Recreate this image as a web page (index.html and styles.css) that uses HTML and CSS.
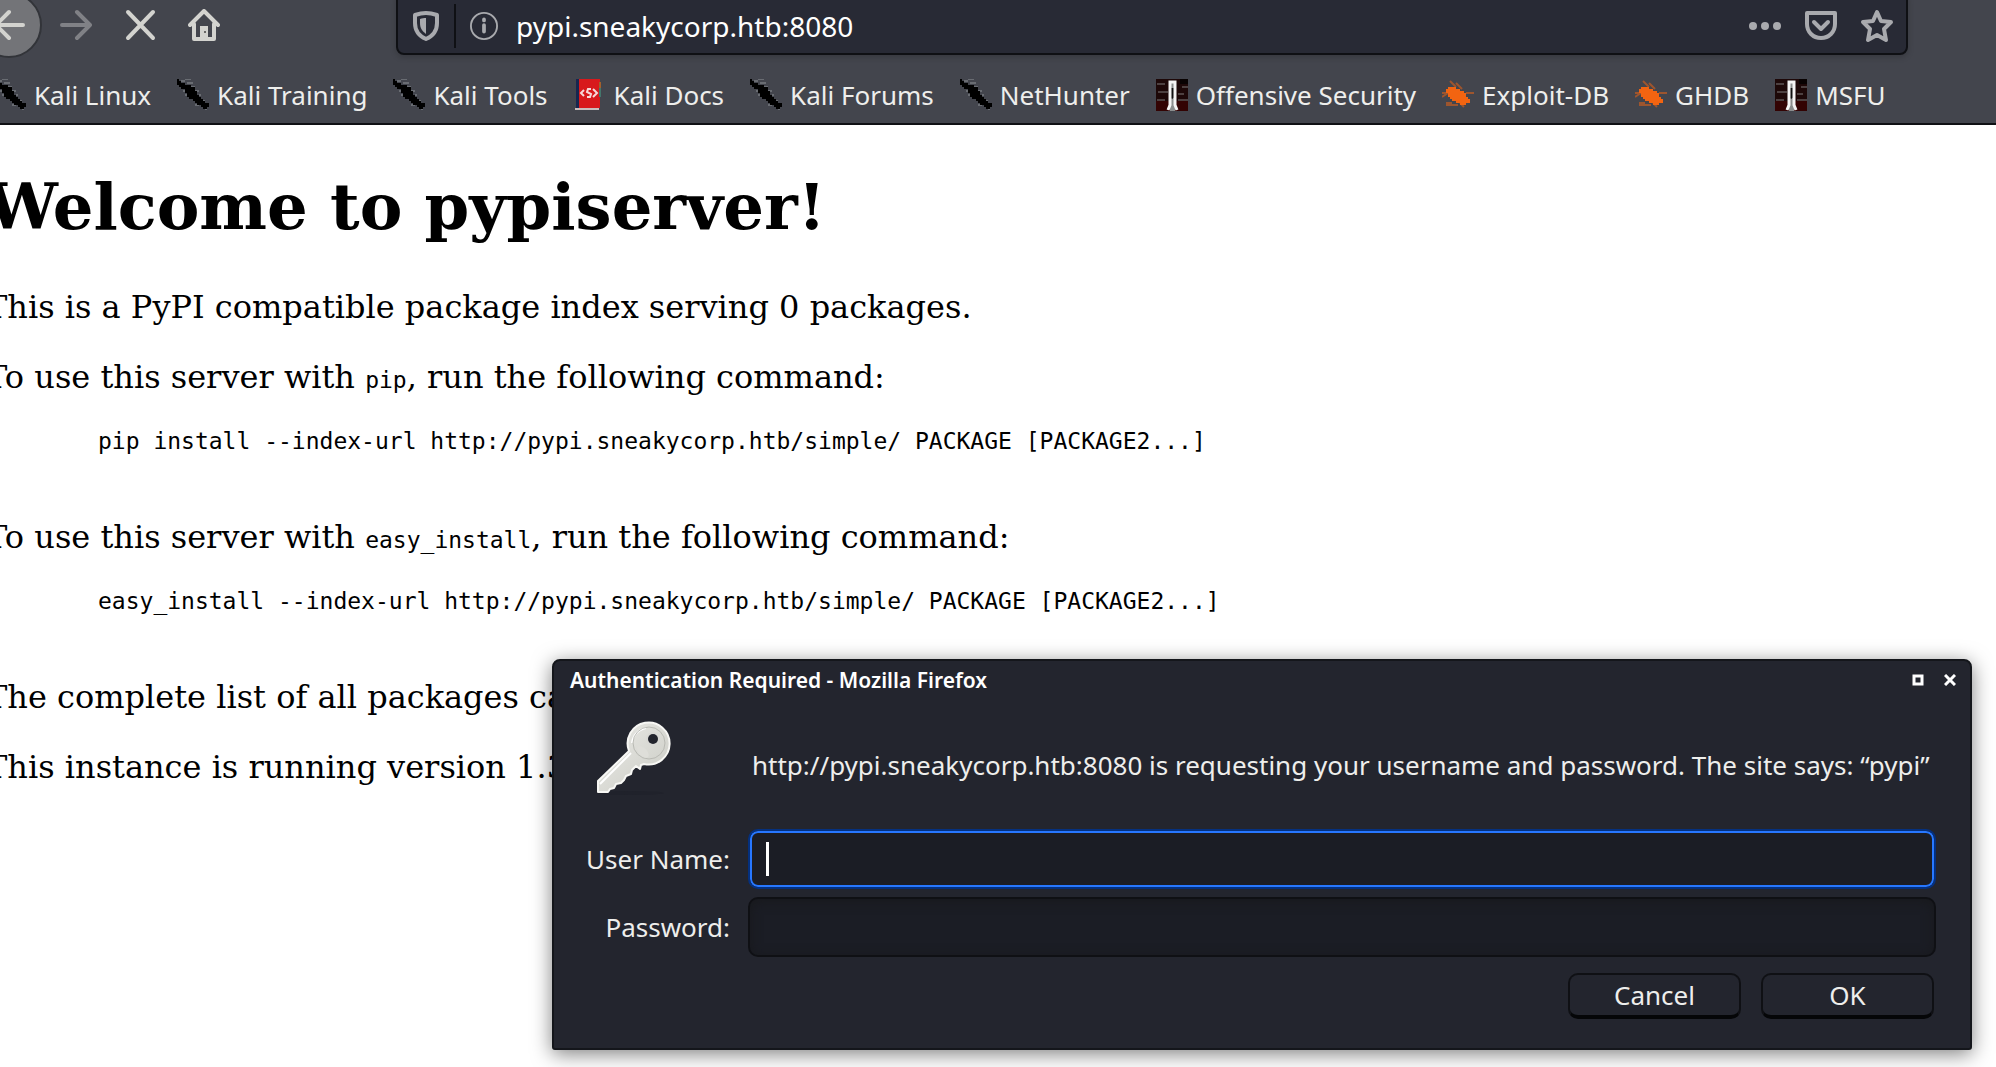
FILE: index.html
```html
<!DOCTYPE html>
<html lang="en">
<head>
<meta charset="utf-8">
<title>Welcome to pypiserver!</title>
<link rel="stylesheet" href="styles.css">
</head>
<body>
<svg class="defs" aria-hidden="true">
  <symbol id="dragon" viewBox="0 0 16 16">
    <path d="M2 1h2M4 0h3M5 2h3M7 4h2M9 6h2M3 6h1M4 8h2M11 8h1M12 11h2M9 13h2M14 15h1" stroke="#696c72" stroke-width="1" fill="none"/>
    <path d="M0 0h1v1h1v1h2v1h3v1h2v2h1v2h1v1h1v1h1v1h1v1h2v2h-1v1h-2v-1h-1v-1h-2v-1H9v-1H8v-1H6V9H5V7H4V5H2V4H1V3H0z" fill="#000"/>
  </symbol>
  <symbol id="book" viewBox="0 0 32 32">
    <path d="M3 0h23v29H3z" fill="#d8191c"/><path d="M2 0h3v29H2z" fill="#17264f"/>
    <path d="M1 29h24v2H1z" fill="#c9bdbd"/><path d="M25 3h2v6h-2z" fill="#a2602c"/><path d="M25 9h2v9h-2z" fill="#43766c"/>
    <path d="M10 11l-3 3 3 3M19 10l4 4-4 4M17 10h-3l-1 3 4 2-1 3h-3" stroke="#f6d9d9" stroke-width="2" fill="none"/>
  </symbol>
  <symbol id="offsec" viewBox="0 0 32 32">
    <path d="M0 0h32v32H0z" fill="#1d0808"/><path d="M0 22h32v10H0z" fill="#330303"/><path d="M24 0h8v5h-8z" fill="#080202"/>
    <path d="M1 5h8M2 13h10M1 21h8M26 8h6M22 15h6M22 21h10" stroke="#4d4141" stroke-width="2"/>
    <path d="M14 3h5v29h-5z" fill="#8a8d8d"/><path d="M14 9h5v9l-3 2-2-2z" fill="#111"/>
    <path d="M12 31l2-5V3h5v23l2 5" stroke="#f4f4f4" stroke-width="3" fill="none"/>
  </symbol>
  <symbol id="bug" viewBox="0 0 16 16">
    <path d="M4 1l3 3M7 2l3 3M0 7h3M0 9l3-2M2 13h6M2 12h3M11 14l-2-2M16 7h-4" stroke="#9d552e" stroke-width="1" fill="none"/>
    <path d="M3 4h4v1h2v1h2v1h1v2h1v1h1v2h-2v1H9v-1H7v-1H5v-1H4V9H3V7H2V5h1z" fill="#f26411"/>
  </symbol>
</svg>
<header class="chrome">
  <div class="navbar">
    <nav class="nav-buttons" aria-label="Navigation">
      <button class="back" aria-label="Back"><svg viewBox="0 0 32 32"><path d="M30 16H3M16 3L3 16l13 13"/></svg></button>
      <button class="tool dim" aria-label="Forward"><svg viewBox="0 0 32 32"><path d="M2 16h28M17 3l13 13-13 13"/></svg></button>
      <button class="tool" aria-label="Stop"><svg viewBox="0 0 32 32"><path d="M4 3l25 26M29 3L4 29"/></svg></button>
      <button class="tool" aria-label="Home"><svg viewBox="0 0 32 32"><path d="M2 16L16 2l14 14M6 15v15h20V15"/><path class="solid" d="M12 17h8v12h-8z"/><circle cx="17" cy="23" r="1" fill="#444" stroke="none"/></svg></button>
    </nav>
    <div class="urlbar">
      <svg class="shield" viewBox="0 0 28 32" aria-hidden="true"><path d="M14 3c4 0 8 1 11 2v8c0 8-4 13-11 16C7 26 3 21 3 13V5c3-1 7-2 11-2z"/><path class="solid" d="M14 8v16c-4-3-6-6-6-11V9c2-1 4-1 6-1z"/></svg>
      <span class="divider"></span>
      <svg class="info" viewBox="0 0 30 30" aria-hidden="true"><circle cx="15" cy="15" r="14"/><path d="M15 14v7M15 8v1"/></svg>
      <input class="address" type="text" value="pypi.sneakycorp.htb:8080" aria-label="Address">
      <button class="action" aria-label="Page actions"><svg viewBox="0 0 34 34"><g class="solid"><circle cx="5" cy="17" r="4"/><circle cx="17" cy="17" r="4"/><circle cx="29" cy="17" r="4"/></g></svg></button>
      <button class="action" aria-label="Save to Pocket"><svg viewBox="0 0 34 34"><path d="M3 4h28v11c0 8-6 14-14 14S3 23 3 15z"/><path d="M10 13l7 7 7-7"/></svg></button>
      <button class="action" aria-label="Bookmark this page"><svg viewBox="0 0 34 34"><path d="M17 3l4 9 10 1-7 7 2 11-9-5-9 5 2-11-7-7 10-1z"/></svg></button>
    </div>
  </div>
  <nav class="bookmarks" aria-label="Bookmarks">
    <a href="#"><svg><use href="#dragon"/></svg>Kali Linux</a>
    <a href="#"><svg><use href="#dragon"/></svg>Kali Training</a>
    <a href="#"><svg><use href="#dragon"/></svg>Kali Tools</a>
    <a href="#"><svg><use href="#book"/></svg>Kali Docs</a>
    <a href="#"><svg><use href="#dragon"/></svg>Kali Forums</a>
    <a href="#"><svg><use href="#dragon"/></svg>NetHunter</a>
    <a href="#"><svg><use href="#offsec"/></svg>Offensive Security</a>
    <a href="#"><svg><use href="#bug"/></svg>Exploit-DB</a>
    <a href="#"><svg><use href="#bug"/></svg>GHDB</a>
    <a href="#"><svg><use href="#offsec"/></svg>MSFU</a>
  </nav>
</header>
<main class="page">
  <h1>Welcome to pypiserver!</h1>
  <p>This is a PyPI compatible package index serving 0 packages.</p>
  <p>To use this server with <code>pip</code>, run the following command:</p>
  <pre>pip install --index-url http://pypi.sneakycorp.htb/simple/ PACKAGE [PACKAGE2...]</pre>
  <p>To use this server with <code>easy_install</code>, run the following command:</p>
  <pre>easy_install --index-url http://pypi.sneakycorp.htb/simple/ PACKAGE [PACKAGE2...]</pre>
  <p>The complete list of all packages can be found here.</p>
  <p>This instance is running version 1.3.2.</p>
</main>
<form class="dialog" role="dialog" aria-labelledby="dialog-title">
  <div class="titlebar">
    <h2 id="dialog-title">Authentication Required - Mozilla Firefox</h2>
    <button type="button" aria-label="Maximize"><svg viewBox="0 0 12 12"><path d="M2 2h8v8H2z"/></svg></button>
    <button type="button" aria-label="Close"><svg viewBox="0 0 12 12"><path d="M1 1l10 10M11 1L1 11"/></svg></button>
  </div>
  <div class="fields">
    <svg class="key" viewBox="0 0 76 76" aria-hidden="true">
      <defs><linearGradient id="metal" x1="0" y1="0" x2="1" y2="1"><stop offset="0" stop-color="#ecece8"/><stop offset="1" stop-color="#c9cac3"/></linearGradient></defs>
      <ellipse cx="34" cy="73" rx="34" ry="2" fill="#20222b"/>
      <path d="M33 31a21 21 0 1 1 15 13l-3 1-1 4-4-3-4 4-1 4-5 2-2 4-3 3-5 1-2 4-4 1-2 3H2V61z" fill="url(#metal)" stroke="#f7f7f4" stroke-width="2" stroke-linejoin="round"/>
      <path d="M4 64l31-31M36 23a17 17 0 0 1 14-15" stroke="#fff" stroke-width="2" fill="none"/>
      <circle cx="53" cy="23" r="16" fill="none" stroke="#b9bab4" stroke-width="1"/>
      <ellipse cx="47" cy="32" rx="7" ry="4" fill="#deded9" transform="rotate(45 47 32)"/>
      <circle cx="57" cy="19" r="7" fill="#d9d9d5"/><circle cx="57" cy="19" r="5" fill="#22242d"/>
    </svg>
    <p class="message">http://pypi.sneakycorp.htb:8080 is requesting your username and password. The site says: “pypi”</p>
    <label for="user">User Name:</label>
    <input class="field focused" id="user" type="text">
    <label for="pass">Password:</label>
    <input class="field" id="pass" type="password">
  </div>
  <div class="buttons">
    <button type="button">Cancel</button>
    <button type="submit">OK</button>
  </div>
</form>
</body>
</html>
```
FILE: styles.css
```css
* { box-sizing: border-box; }

body {
  margin: 0;
  min-height: 100vh;
  position: relative;
  overflow: hidden;
  background: #fff;
  color: #000;
  font-family: "DejaVu Serif", serif;
}

svg { display: block; flex: none; }
.defs { position: absolute; width: 0; height: 0; }

button, input {
  margin: 0;
  padding: 0;
  border: 0;
  background: none;
  color: inherit;
  font: inherit;
}

/* Browser toolbar */
.chrome {
  height: 125px;
  overflow: hidden;
  background: #43454d;
  border-bottom: 2px solid #0f1014;
  color: #eeeeec;
  font-family: "Noto Sans", sans-serif;
  font-size: 26px;
}

.navbar {
  display: flex;
  height: 64px;
  padding-right: 88px;
}

.nav-buttons {
  display: flex;
  width: 396px;
  flex: none;
  height: 50px;
  align-items: center;
  gap: 32px;
}

.nav-buttons svg {
  width: 32px;
  height: 32px;
  fill: none;
  stroke: #d3d3cf;
  stroke-width: 4;
  stroke-linecap: round;
  stroke-linejoin: round;
}

.nav-buttons .solid { fill: #d3d3cf; stroke: none; }
.nav-buttons .dim svg { stroke: #808186; }

.back {
  display: flex;
  flex: none;
  width: 66px;
  height: 66px;
  margin-left: -24px;
  margin-right: -14px;
  align-items: center;
  justify-content: center;
  border: 2px solid #323439;
  border-radius: 50%;
  background: #737478;
}

.urlbar {
  display: flex;
  flex: 1;
  height: 64px;
  margin-top: -9px;
  padding: 8px 12px 2px 14px;
  align-items: center;
  gap: 14px;
  border: 2px solid #0f1014;
  border-radius: 8px;
  background: #282a35;
  box-shadow: 0 2px 6px rgba(0, 0, 0, 0.2);
}

.urlbar svg {
  fill: none;
  stroke: #a9aaae;
  stroke-width: 4;
  stroke-linecap: round;
  stroke-linejoin: round;
}

.urlbar .solid { fill: #a9aaae; stroke: none; }
.urlbar .shield { width: 28px; height: 32px; }
.urlbar .info { width: 28px; height: 28px; stroke-width: 2; }
.urlbar .info path { stroke-width: 4; }
.divider { width: 2px; height: 44px; background: #0f1014; }

.address {
  flex: 1;
  min-width: 0;
  padding-left: 4px;
  color: #fff;
  font-size: 28px;
}

.action { width: 34px; height: 34px; margin-left: 8px; }
.action svg { width: 34px; height: 34px; }

.bookmarks {
  display: flex;
  height: 62px;
  margin-left: -6px;
  align-items: center;
  gap: 26px;
}

.bookmarks a {
  display: flex;
  align-items: center;
  gap: 8px;
  color: inherit;
  text-decoration: none;
  white-space: nowrap;
}

.bookmarks svg { width: 32px; height: 32px; }

/* Page content, scrolled a little to the right */
.page {
  margin-left: -14px;
  font-size: 32px;
  line-height: 38px;
}

.page h1 {
  margin: 45px 0 44px;
  font-size: 64px;
  line-height: 74px;
}

.page p { margin: 32px 0; }

.page code, .page pre {
  font-family: "DejaVu Sans Mono", monospace;
  font-size: 23px;
}

.page code { line-height: 1; }

.page pre {
  margin: 0;
  padding: 0 0 32px 112px;
  line-height: 26px;
}

/* Authentication window */
.dialog {
  position: absolute;
  top: 659px;
  left: 552px;
  right: 24px;
  padding-bottom: 29px;
  border: 2px solid #14161b;
  border-radius: 8px 8px 3px 3px;
  background: #23252e;
  box-shadow: 0 4px 20px rgba(0, 0, 0, 0.5);
  color: #eeeeec;
  font-family: "Noto Sans", sans-serif;
  font-size: 26px;
}

.titlebar {
  display: flex;
  height: 38px;
  padding: 0 14px 0 16px;
  align-items: center;
  gap: 20px;
  color: #fff;
}

.titlebar h2 {
  flex: 1;
  margin: 0;
  font-size: 21px;
  font-weight: 600;
}

.titlebar svg {
  width: 12px;
  height: 12px;
  fill: none;
  stroke: #fff;
  stroke-width: 3;
}

.fields {
  display: grid;
  grid-template-columns: 176px 1fr;
  grid-template-rows: 112px 60px 60px;
  column-gap: 18px;
  row-gap: 8px;
  padding: 10px 34px 0 0;
  align-items: center;
}

.key { width: 76px; height: 76px; margin: 0 0 14px 42px; }
.message { margin: 0 0 0 4px; white-space: nowrap; }
.fields label { text-align: right; white-space: nowrap; }

.field {
  width: 100%;
  height: 60px;
  padding: 0 16px;
  border: 2px solid #0f1014;
  border-radius: 10px;
  background: #1b1d25;
  box-shadow: inset 0 2px 12px #18191c;
}

.focused {
  border-color: #04307e;
  outline: none;
  background: linear-gradient(#fff, #fff) 16px center / 3px 34px no-repeat #1b1d25;
  box-shadow: inset 0 0 0 2px #2777ff;
}

.buttons {
  display: flex;
  margin-top: 16px;
  padding-right: 36px;
  justify-content: flex-end;
  gap: 20px;
}

.buttons button {
  width: 173px;
  height: 46px;
  border: 2px solid #0f1014;
  border-bottom: 4px solid #050608;
  border-radius: 10px;
  background: #23252e;
}
```
